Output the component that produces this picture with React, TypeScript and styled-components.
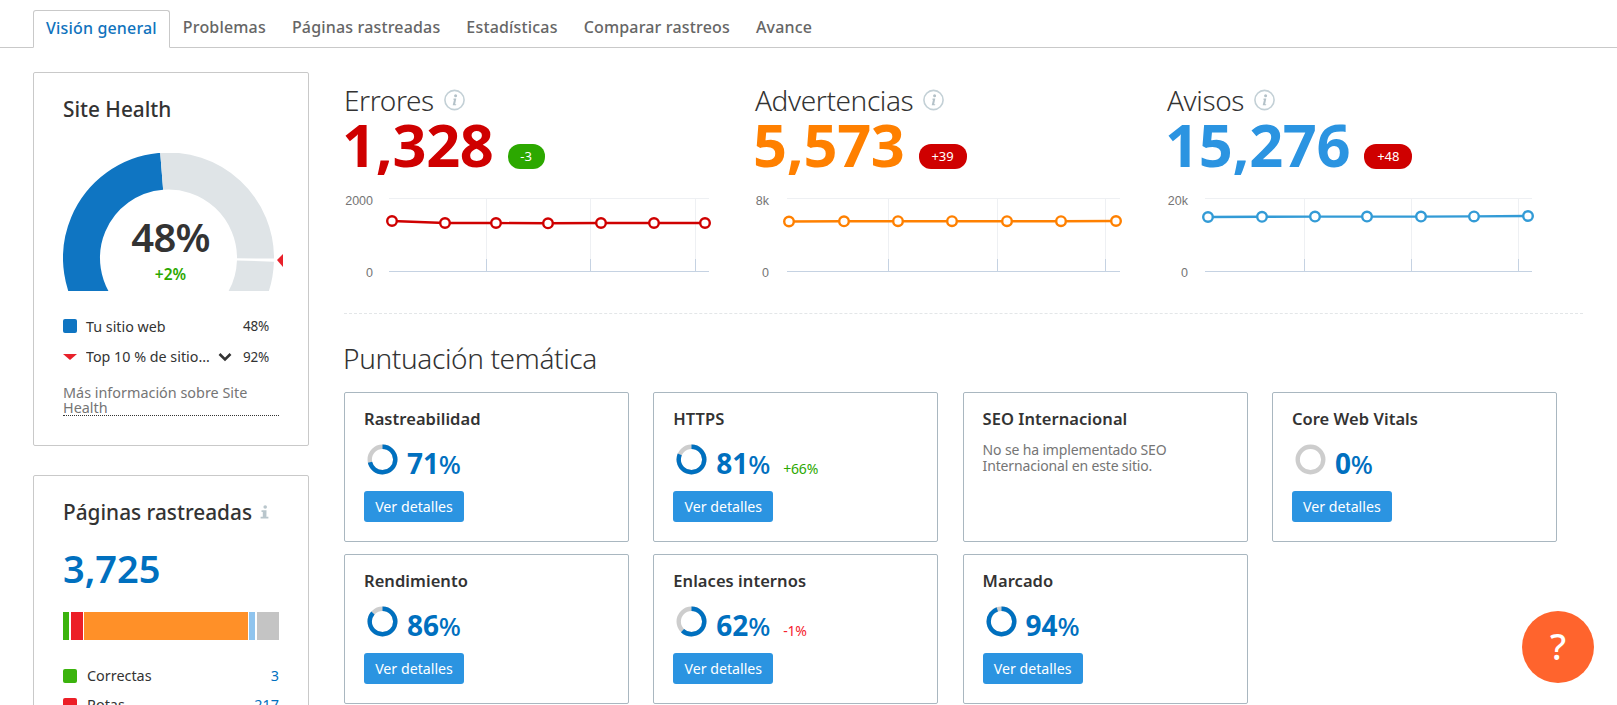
import React from "react";
import styled, { createGlobalStyle } from "styled-components";

const FONT = `"Noto Sans", "Open Sans", sans-serif`;

const Global = createGlobalStyle`
  html, body { margin: 0; padding: 0; background: #fff; height: 100%; overflow: hidden; }
  body { font-family: ${FONT}; color: #333; }
  * { box-sizing: border-box; }
`;

const Page = styled.div`
  width: 1617px;
  height: 705px;
  overflow: hidden;
  position: relative;
`;
const TabBar = styled.nav`
  display: flex;
  height: 48px;
  padding: 10px 0 0 33px;
  border-bottom: 1px solid #c9c9c9;
`;
const Tab = styled.div<{ $active?: boolean }>`
  height: ${(p) => (p.$active ? "38px" : "37px")};
  padding: 0 ${(p) => (p.$active ? "12px" : "13px")} 3px;
  display: flex;
  align-items: center;
  font-size: 16px;
  font-weight: 500;
  letter-spacing: 0.17px;
  white-space: nowrap;
  color: ${(p) => (p.$active ? "#0f73bd" : "#666")};
  background: ${(p) => (p.$active ? "#fff" : "transparent")};
  border: ${(p) => (p.$active ? "1px solid #c9c9c9" : "none")};
  border-bottom: ${(p) => (p.$active ? "1px solid #fff" : "none")};
  border-radius: 3px 3px 0 0;
`;
const Body = styled.div`
  display: flex;
  padding-left: 33px;
`;
const Sidebar = styled.aside`
  width: 276px;
  padding-top: 24px;
  flex: none;
  display: flex;
  flex-direction: column;
  gap: 29px;
`;
const Panel = styled.section<{ $top: number; $bottom: number }>`
  border: 1px solid #c9c9c9;
  border-radius: 2px;
  padding: ${(p) => p.$top}px 29px ${(p) => p.$bottom}px;
`;
const PanelTitle = styled.h2`
  margin: 0;
  display: flex;
  align-items: center;
  font-size: 20.8px;
  line-height: 24px;
  font-weight: 500;
  color: #333;
  letter-spacing: 0;
  white-space: nowrap;
`;
const GaugeBox = styled.div`
  position: relative;
  margin-top: 32px;
  height: 138px;
`;
const GaugeSvg = styled.svg`
  display: block;
`;
const GaugeCenter = styled.div`
  position: absolute;
  left: 0;
  width: 215px;
  top: 62px;
  text-align: center;
`;
const GaugeValue = styled.div`
  font-size: 40px;
  line-height: 44px;
  font-weight: 600;
  letter-spacing: -0.8px;
  color: #333;
`;
const GaugeDelta = styled.div`
  margin-top: 5px;
  font-size: 15.5px;
  line-height: 20px;
  font-weight: 600;
  color: #2ca800;
`;
const Legend = styled.div`
  margin-top: 20px;
`;
const LegendRow = styled.div`
  height: 30.5px;
  display: flex;
  align-items: center;
  font-size: 14.3px;
  color: #333;
`;
const Swatch = styled.span<{ $color: string }>`
  width: 14px;
  height: 14px;
  border-radius: 2px;
  background: ${(p) => p.$color};
  margin-right: 9px;
  flex: none;
`;
const Marker = styled.span`
  width: 0;
  height: 0;
  border-left: 7px solid transparent;
  border-right: 7px solid transparent;
  border-top: 6px solid #e8202a;
  margin-right: 9px;
  flex: none;
`;
const LegendName = styled.span`
  width: 125px;
  white-space: nowrap;
  overflow: hidden;
`;
const Chevron = styled.svg`
  margin-left: 7px;
  flex: none;
`;
const LegendValue = styled.span`
  margin-left: auto;
  margin-right: 10px;
  font-size: 13.5px;
  letter-spacing: -0.2px;
`;
const MoreLink = styled.div`
  margin-top: 13px;
  font-size: 14.4px;
  line-height: 15px;
  color: #757575;
  border-bottom: 1px dotted #333;
`;
const PagesTotal = styled.div`
  margin-top: 24px;
  font-size: 38px;
  line-height: 40px;
  font-weight: 600;
  letter-spacing: 0;
  color: #0070bf;
`;
const StackBar = styled.div`
  margin-top: 24px;
  height: 28px;
  display: flex;
  gap: 1px;
`;
const StackPart = styled.div<{ $color: string; $w: number; $gap?: number }>`
  width: ${(p) => p.$w}px;
  margin-right: ${(p) => p.$gap ?? 0}px;
  background: ${(p) => p.$color};
`;
const PageRows = styled.div`
  margin-top: 21px;
`;
const PageRow = styled.div`
  height: 29px;
  display: flex;
  align-items: center;
  font-size: 14.4px;
  color: #333;
`;
const PageRowSwatch = styled(Swatch)`
  margin-right: 10px;
`;
const PageRowValue = styled.span`
  margin-left: auto;
  color: #0070bf;
`;
const Main = styled.main`
  margin-left: 35px;
  width: 1239px;
  padding-top: 35px;
`;
const Metrics = styled.div`
  display: grid;
  grid-template-columns: 411px 412px 412px;
`;
const MetricHead = styled.div`
  display: flex;
  align-items: center;
  height: 34px;
`;
const MetricTitle = styled.h2`
  margin: 0;
  font-size: 28px;
  line-height: 34px;
  font-weight: 300;
  letter-spacing: -0.4px;
  color: #333;
`;
const InfoSvg = styled.svg`
  margin-left: 10px;
  flex: none;
`;
const SmallInfoSvg = styled.svg`
  margin-left: 8px;
  flex: none;
`;
const MetricValueRow = styled.div`
  display: flex;
  height: 72px;
  margin-top: -1px;
`;
const MetricValue = styled.div<{ $color: string }>`
  margin-left: -2px;
  font-size: 59.5px;
  line-height: 56px;
  font-weight: 700;
  letter-spacing: -0.3px;
  color: ${(p) => p.$color};
`;
const Badge = styled.div<{ $color: string; $w: number }>`
  width: ${(p) => p.$w}px;
  height: 25px;
  margin: 28px 0 0 14px;
  border-radius: 12px;
  background: ${(p) => p.$color};
  color: #fff;
  font-size: 13px;
  line-height: 25px;
  text-align: center;
`;
const ChartWrap = styled.div`
  margin-top: 2px;
`;
const ChartSvg = styled.svg`
  display: block;
`;
const Divider = styled.div`
  margin-top: 28px;
  border-top: 1px dashed #e3e6e8;
`;
const SectionTitle = styled.h2`
  margin: 27px 0 0 -1px;
  font-size: 28px;
  line-height: 34px;
  font-weight: 300;
  letter-spacing: -0.36px;
  color: #333;
`;
const Cards = styled.div`
  margin: 17px 0 0;
  display: grid;
  grid-template-columns: repeat(4, 285px);
  column-gap: 24.3px;
  row-gap: 12px;
`;
const Card = styled.article`
  height: 150px;
  padding: 14px 19px 0;
  border: 1px solid #a9b7c0;
  border-radius: 2px;
`;
const CardTitle = styled.h3`
  margin: 0;
  font-size: 16.5px;
  line-height: 24px;
  font-weight: 600;
  letter-spacing: 0.05px;
  color: #333;
`;
const CardNote = styled.p`
  margin: 11px 0 0;
  font-size: 14px;
  line-height: 15.5px;
  letter-spacing: -0.15px;
  color: #757575;
`;
const ScoreRow = styled.div`
  margin-top: 13px;
  height: 30px;
  display: flex;
`;
const Donut = styled.svg`
  margin-left: 3px;
  flex: none;
`;
const Score = styled.div`
  margin: 3px 0 0 9px;
  font-size: 28px;
  line-height: 32px;
  font-weight: 700;
  letter-spacing: -0.1px;
  color: #0070bf;
`;
const ScoreSign = styled.span`
  font-weight: 500;
  font-size: 26px;
`;
const ScoreDelta = styled.div<{ $color: string }>`
  margin: 16px 0 0 13px;
  font-size: 14px;
  line-height: 18px;
  letter-spacing: -0.2px;
  color: ${(p) => p.$color};
`;
const DetailsButton = styled.button`
  display: block;
  margin-top: 17px;
  width: 100px;
  height: 31px;
  padding: 0;
  border: none;
  border-radius: 3px;
  background: #2b94e1;
  color: #fff;
  font-family: ${FONT};
  font-size: 14.2px;
  letter-spacing: 0;
`;
const HelpButton = styled.div`
  position: absolute;
  left: 1522px;
  top: 611px;
  width: 72px;
  height: 72px;
  border-radius: 50%;
  background: #ff642d;
  color: #fff;
  font-size: 36px;
  font-weight: 500;
  line-height: 72px;
  text-align: center;
`;

const polar = (cx: number, cy: number, r: number, deg: number) => {
  const a = (deg * Math.PI) / 180;
  return [cx + r * Math.sin(a), cy - r * Math.cos(a)];
};
const arc = (cx: number, cy: number, r: number, from: number, to: number) => {
  const [x1, y1] = polar(cx, cy, r, from);
  const [x2, y2] = polar(cx, cy, r, to);
  return `M${x1} ${y1}A${r} ${r} 0 ${to - from > 180 ? 1 : 0} 1 ${x2} ${y2}`;
};

const Gauge = () => (
  <GaugeSvg width="225" height="138" viewBox="0 0 225 138">
    <path d={arc(105.5, 105, 87, -130, -4.5)} fill="none" stroke="#0f75c2" strokeWidth="37" />
    <path d={arc(105.5, 105, 87, -4.5, 90.3)} fill="none" stroke="#dfe4e7" strokeWidth="37" />
    <path d={arc(105.5, 105, 87, 92, 130)} fill="none" stroke="#dfe4e7" strokeWidth="37" />
    <polygon points="214,107 220,101 220,114" fill="#e8202a" />
  </GaugeSvg>
);

const Info = () => (
  <InfoSvg width="21" height="22" viewBox="0 0 21 22">
    <circle cx="10.5" cy="11" r="9.6" fill="#fff" stroke="#c3d0d6" strokeWidth="1.6" />
    <circle cx="11.6" cy="6.8" r="1.5" fill="#b3c1c8" />
    <path d="M9.6 9.6h2.7l-1.2 5.6h1.2l-.3 1.1H8.7l1.3-5.6H9.3z" fill="#b3c1c8" />
  </InfoSvg>
);
const SmallInfo = () => (
  <SmallInfoSvg width="9" height="14" viewBox="0 0 9 14">
    <circle cx="5.2" cy="2" r="1.8" fill="#b9c6cc" />
    <path d="M1.5 5.2h5l-.1 6.6h2v1.8H.6v-1.8h2.2V7H1.5z" fill="#b9c6cc" />
  </SmallInfoSvg>
);

type ChartSpec = {
  left: number;
  top: string;
  labelRight: number;
  grid: [number, number];
  ticks: number[];
  xs: number[];
  ys: number[];
  color: string;
};
const Chart = ({ spec }: { spec: ChartSpec }) => {
  const pts = spec.xs.map((x, i) => `${x - spec.left},${spec.ys[i] - 190}`).join(" ");
  return (
    <ChartSvg width="411" height="95" viewBox="0 0 411 95">
      <line x1={spec.grid[0] - spec.left} x2={spec.grid[1] - spec.left} y1="8.5" y2="8.5" stroke="#eef0f3" />
      {spec.ticks.map((t) => (
        <g key={t}>
          <line x1={t - spec.left + 0.5} x2={t - spec.left + 0.5} y1="8" y2="69" stroke="#eef0f3" />
          <line x1={t - spec.left + 0.5} x2={t - spec.left + 0.5} y1="69" y2="81" stroke="#c5d2e2" />
        </g>
      ))}
      <line x1={spec.grid[0] - spec.left} x2={spec.grid[1] - spec.left} y1="81.5" y2="81.5" stroke="#c5d2e2" />
      <text x={spec.labelRight - spec.left} y="15" textAnchor="end" fontFamily="Liberation Sans" fontSize="12.5" fill="#757575">{spec.top}</text>
      <text x={spec.labelRight - spec.left} y="87" textAnchor="end" fontFamily="Liberation Sans" fontSize="12.5" fill="#757575">0</text>
      <polyline points={pts} fill="none" stroke={spec.color} strokeWidth="2.4" />
      {spec.xs.map((x, i) => (
        <circle key={x} cx={x - spec.left} cy={spec.ys[i] - 190} r="4.8" fill="#fff" stroke={spec.color} strokeWidth="2.4" />
      ))}
    </ChartSvg>
  );
};

const metrics = [
  {
    title: "Errores", value: "1,328", color: "#cf0000", badge: "-3", badgeColor: "#2ca800", badgeW: 37,
    chart: { left: 344, top: "2000", labelRight: 373, grid: [389, 709] as [number, number], ticks: [486, 590, 695],
      xs: [392, 445, 496, 548, 601, 654, 705], ys: [221, 223, 223, 223.3, 223, 223, 223], color: "#cf0000" },
  },
  {
    title: "Advertencias", value: "5,573", color: "#ff8000", badge: "+39", badgeColor: "#cf0000", badgeW: 48,
    chart: { left: 755, top: "8k", labelRight: 769, grid: [787, 1120] as [number, number], ticks: [888, 997, 1105],
      xs: [789, 844, 898, 952, 1007, 1061, 1116], ys: [221.5, 221.3, 221.2, 221.2, 221.2, 221.2, 221], color: "#ff8000" },
  },
  {
    title: "Avisos", value: "15,276", color: "#2b94e1", badge: "+48", badgeColor: "#cf0000", badgeW: 48,
    chart: { left: 1167, top: "20k", labelRight: 1188, grid: [1205, 1532] as [number, number], ticks: [1304, 1411, 1518],
      xs: [1208, 1262, 1315, 1367, 1421, 1474, 1528], ys: [217, 216.8, 216.6, 216.6, 216.6, 216.4, 216], color: "#339bd6" },
  },
];

const ScoreDonut = ({ pct }: { pct: number }) => {
  const r = 12.8;
  const c = 2 * Math.PI * r;
  return (
    <Donut width="31" height="31" viewBox="0 0 31 31">
      <circle cx="15.5" cy="15.5" r={r} fill="none" stroke="#cdcdcd" strokeWidth="4.4" />
      <circle
        cx="15.5" cy="15.5" r={r} fill="none" stroke="#0070bf" strokeWidth="4.4"
        strokeDasharray={`${(c * pct) / 100} ${c}`}
        transform="rotate(-90 15.5 15.5)"
      />
    </Donut>
  );
};

type Topic = { title: string; pct?: number; delta?: string; deltaColor?: string; note?: string };
const topics: Topic[] = [
  { title: "Rastreabilidad", pct: 71 },
  { title: "HTTPS", pct: 81, delta: "+66%", deltaColor: "#2ca800" },
  { title: "SEO Internacional", note: "No se ha implementado SEO Internacional en este sitio." },
  { title: "Core Web Vitals", pct: 0 },
  { title: "Rendimiento", pct: 86 },
  { title: "Enlaces internos", pct: 62, delta: "-1%", deltaColor: "#f5222d" },
  { title: "Marcado", pct: 94 },
];

const tabs = ["Visión general", "Problemas", "Páginas rastreadas", "Estadísticas", "Comparar rastreos", "Avance"];

export default function App() {
  return (
    <Page>
      <Global />
      <TabBar>
        {tabs.map((t, i) => (
          <Tab key={t} $active={i === 0}>{t}</Tab>
        ))}
      </TabBar>
      <Body>
        <Sidebar>
          <Panel $top={24} $bottom={29}>
            <PanelTitle>Site Health</PanelTitle>
            <GaugeBox>
              <Gauge />
              <GaugeCenter>
                <GaugeValue>48%</GaugeValue>
                <GaugeDelta>+2%</GaugeDelta>
              </GaugeCenter>
            </GaugeBox>
            <Legend>
              <LegendRow>
                <Swatch $color="#0f75c2" />
                <span>Tu sitio web</span>
                <LegendValue>48%</LegendValue>
              </LegendRow>
              <LegendRow>
                <Marker />
                <LegendName>Top 10 % de sitio…</LegendName>
                <Chevron width="14" height="10" viewBox="0 0 14 10">
                  <path d="M1.5 2l5.5 5.5L12.5 2" fill="none" stroke="#333" strokeWidth="2.6" />
                </Chevron>
                <LegendValue>92%</LegendValue>
              </LegendRow>
            </Legend>
            <MoreLink>Más información sobre Site Health</MoreLink>
          </Panel>
          <Panel $top={24} $bottom={0}>
            <PanelTitle>Páginas rastreadas<SmallInfo /></PanelTitle>
            <PagesTotal>3,725</PagesTotal>
            <StackBar>
              <StackPart $color="#3bb30d" $w={6} $gap={1} />
              <StackPart $color="#ec1f27" $w={12} />
              <StackPart $color="#ff9028" $w={164} />
              <StackPart $color="#8fc4ee" $w={6} $gap={1} />
              <StackPart $color="#c4c4c4" $w={22} />
            </StackBar>
            <PageRows>
              <PageRow>
                <PageRowSwatch $color="#3bb30d" />
                <span>Correctas</span>
                <PageRowValue>3</PageRowValue>
              </PageRow>
              <PageRow>
                <PageRowSwatch $color="#ec1f27" />
                <span>Rotas</span>
                <PageRowValue>217</PageRowValue>
              </PageRow>
            </PageRows>
          </Panel>
        </Sidebar>
        <Main>
          <Metrics>
            {metrics.map((m) => (
              <div key={m.title}>
                <MetricHead>
                  <MetricTitle>{m.title}</MetricTitle>
                  <Info />
                </MetricHead>
                <MetricValueRow>
                  <MetricValue $color={m.color}>{m.value}</MetricValue>
                  <Badge $color={m.badgeColor} $w={m.badgeW}>{m.badge}</Badge>
                </MetricValueRow>
                <ChartWrap>
                  <Chart spec={m.chart} />
                </ChartWrap>
              </div>
            ))}
          </Metrics>
          <Divider />
          <SectionTitle>Puntuación temática</SectionTitle>
          <Cards>
            {topics.map((t) => (
              <Card key={t.title}>
                <CardTitle>{t.title}</CardTitle>
                {t.note ? (
                  <CardNote>{t.note}</CardNote>
                ) : (
                  <>
                    <ScoreRow>
                      <ScoreDonut pct={t.pct ?? 0} />
                      <Score>{t.pct}<ScoreSign>%</ScoreSign></Score>
                      {t.delta && <ScoreDelta $color={t.deltaColor ?? "#333"}>{t.delta}</ScoreDelta>}
                    </ScoreRow>
                    <DetailsButton>Ver detalles</DetailsButton>
                  </>
                )}
              </Card>
            ))}
          </Cards>
        </Main>
      </Body>
      <HelpButton>?</HelpButton>
    </Page>
  );
}
